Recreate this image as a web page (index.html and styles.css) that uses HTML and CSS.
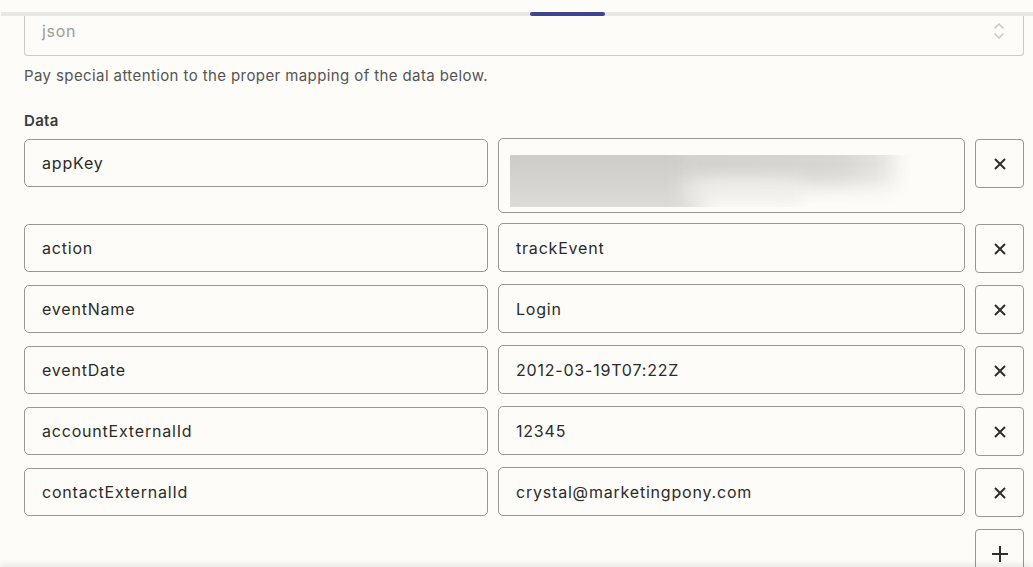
FILE: index.html
```html
<!DOCTYPE html>
<html lang="en">
<head>
    <meta charset="UTF-8">
    <meta name="viewport" content="width=device-width, initial-scale=1.0">
    <title>Data mapping</title>
    <link rel="stylesheet" href="styles.css">
</head>
<body>

    <div class="tab-bar">
        <div class="tab-line"></div>
        <div class="tab-indicator"></div>
    </div>

    <div class="form">
        <div class="select-box">
            <span class="select-value">json</span>
            <svg class="select-arrows" width="12" height="18" viewBox="0 0 12 18">
                <path d="M1.5 6.5 L6 2 L10.5 6.5" />
                <path d="M1.5 11.5 L6 16 L10.5 11.5" />
            </svg>
        </div>

        <p class="hint">Pay special attention to the proper mapping of the data below.</p>

        <div class="field-label">Data</div>

        <div class="data-rows">
            <div class="data-row first">
                <div class="input-box">appKey</div>
                <div class="input-box tall">
                    <div class="blurred">
                        <span class="blob blob-a"></span>
                        <span class="blob blob-b"></span>
                        <span class="blob blob-c"></span>
                    </div>
                </div>
                <button class="icon-button" type="button" aria-label="Remove">
                    <svg width="14" height="14" viewBox="0 0 14 14"><path d="M2 2 L12 12 M12 2 L2 12" /></svg>
                </button>
            </div>

            <div class="data-row">
                <div class="input-box">action</div>
                <div class="input-box">trackEvent</div>
                <button class="icon-button" type="button" aria-label="Remove">
                    <svg width="14" height="14" viewBox="0 0 14 14"><path d="M2 2 L12 12 M12 2 L2 12" /></svg>
                </button>
            </div>

            <div class="data-row">
                <div class="input-box">eventName</div>
                <div class="input-box">Login</div>
                <button class="icon-button" type="button" aria-label="Remove">
                    <svg width="14" height="14" viewBox="0 0 14 14"><path d="M2 2 L12 12 M12 2 L2 12" /></svg>
                </button>
            </div>

            <div class="data-row">
                <div class="input-box">eventDate</div>
                <div class="input-box">2012-03-19T07:22Z</div>
                <button class="icon-button" type="button" aria-label="Remove">
                    <svg width="14" height="14" viewBox="0 0 14 14"><path d="M2 2 L12 12 M12 2 L2 12" /></svg>
                </button>
            </div>

            <div class="data-row">
                <div class="input-box">accountExternalId</div>
                <div class="input-box">12345</div>
                <button class="icon-button" type="button" aria-label="Remove">
                    <svg width="14" height="14" viewBox="0 0 14 14"><path d="M2 2 L12 12 M12 2 L2 12" /></svg>
                </button>
            </div>

            <div class="data-row">
                <div class="input-box">contactExternalId</div>
                <div class="input-box">crystal@marketingpony.com</div>
                <button class="icon-button" type="button" aria-label="Remove">
                    <svg width="14" height="14" viewBox="0 0 14 14"><path d="M2 2 L12 12 M12 2 L2 12" /></svg>
                </button>
            </div>

            <div class="data-row">
                <div></div>
                <div></div>
                <button class="icon-button" type="button" aria-label="Add">
                    <svg width="18" height="18" viewBox="0 0 18 18"><path d="M9 1 L9 17 M1 9 L17 9" /></svg>
                </button>
            </div>
        </div>
    </div>

    <div class="footer-shadow"></div>

</body>
</html>
```

FILE: styles.css
```css
/* Base page */
body {
    margin: 0;
    background-color: #fdfcf9;
    font-family: Inter, "Noto Sans", Arial, sans-serif;
    color: #2d2e2e;
    height: 567px;
    overflow: hidden;
}

/* Tabs strip at the top */
.tab-bar {
    position: relative;
    height: 16px;
    display: flex;
    flex-direction: column;
    justify-content: flex-end;
}

.tab-line {
    height: 4px;
    margin-left: 1px;
    background-color: #e8e7e3;
}

.tab-indicator {
    position: absolute;
    left: 530px;
    bottom: 0;
    width: 75px;
    height: 4px;
    border-radius: 2px;
    background-color: #3d4592;
}

.form {
    padding: 0 9px 0 24px;
}

/* Select (scrolled, top edge hidden) */
.select-box {
    box-sizing: border-box;
    height: 40px;
    border: 1px solid #cbcac6;
    border-top: none;
    border-radius: 0 0 4px 4px;
    display: flex;
    align-items: flex-start;
    justify-content: space-between;
    padding: 5px 18px 0 17px;
}

.select-value {
    font-size: 16px;
    line-height: 20px;
    letter-spacing: 0.7px;
    color: #9b9a97;
}

.select-arrows {
    margin-top: 1px;
}

.select-arrows path {
    fill: none;
    stroke: #c8c7c3;
    stroke-width: 1.5;
}

.hint {
    margin: 10px 0 0 0;
    font-size: 15px;
    line-height: 20px;
    letter-spacing: 0.4px;
    color: #555553;
}

.field-label {
    margin-top: 25px;
    font-size: 15px;
    line-height: 20px;
    letter-spacing: 0.3px;
    font-weight: 600;
    color: #3b3b3a;
}

/* Key / value rows */
.data-rows {
    margin-top: 7px;
    display: flex;
    flex-direction: column;
    gap: 12px;
}

.data-row {
    display: grid;
    grid-template-columns: 464px 467px 49px;
    column-gap: 10px;
    align-items: start;
    height: 49px;
}

.data-row.first {
    height: 73px;
}

.input-box {
    box-sizing: border-box;
    height: 49px;
    border: 1px solid #979795;
    border-radius: 5px;
    padding: 0 17px;
    display: flex;
    align-items: center;
    font-size: 16px;
    letter-spacing: 0.8px;
    color: #2b2b2a;
    background-color: #fdfcf9;
}

.data-row .input-box:first-child {
    margin-top: 1px;
    height: 48px;
}

.input-box.tall {
    height: 75px;
    padding: 0 0 0 11px;
    align-items: flex-start;
}

/* Hidden (blurred) secret value */
.blurred {
    position: relative;
    width: 400px;
    height: 52px;
    margin-top: 16px;
    overflow: hidden;
}

.blob {
    position: absolute;
    filter: blur(10px);
}

.blob-a {
    left: -20px;
    top: -20px;
    width: 210px;
    height: 92px;
    background: linear-gradient(180deg, #c8c7c3 0%, #d5d4d0 55%, #e3e2df 100%);
}

.blob-b {
    left: 170px;
    top: -20px;
    width: 215px;
    height: 50px;
    background: linear-gradient(90deg, #d2d1cd 0%, #d7d6d2 75%, #e9e8e4 100%);
}

.blob-c {
    left: 170px;
    top: 26px;
    width: 120px;
    height: 20px;
    background-color: #eeede9;
}

.icon-button {
    box-sizing: border-box;
    width: 49px;
    height: 49px;
    margin-top: 1px;
    padding: 0;
    border: 1px solid #979795;
    border-radius: 4px;
    background-color: #fdfcf9;
    display: flex;
    align-items: center;
    justify-content: center;
    cursor: pointer;
}

.icon-button path {
    fill: none;
    stroke: #2d2e2e;
    stroke-width: 2;
}

/* Soft shadow from the panel below */
.footer-shadow {
    position: fixed;
    left: 0;
    right: 0;
    bottom: -12px;
    height: 12px;
    background-color: #f3f2ef;
    box-shadow: 0 -3px 6px rgba(0, 0, 0, 0.08);
}
```
